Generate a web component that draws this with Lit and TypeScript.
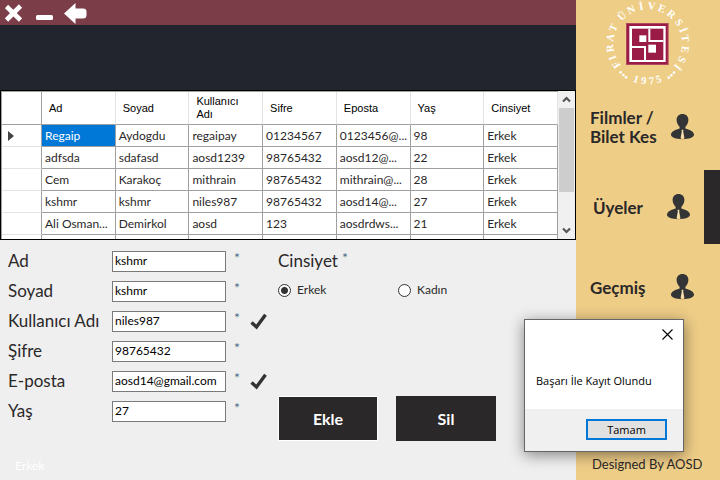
import { LitElement, html, svg, css } from "lit";
import { customElement, state } from "lit/decorators.js";
import { classMap } from "lit/directives/class-map.js";

const COLUMNS = ["Ad", "Soyad", "Kullanıcı Adı", "Sifre", "Eposta", "Yaş", "Cinsiyet"];

const MEMBERS = [
  ["Regaip", "Aydogdu", "regaipay", "01234567", "0123456@...", "98", "Erkek"],
  ["adfsda", "sdafasd", "aosd1239", "98765432", "aosd12@...", "22", "Erkek"],
  ["Cem", "Karakoç", "mithrain", "98765432", "mithrain@...", "28", "Erkek"],
  ["kshmr", "kshmr", "niles987", "98765432", "aosd14@...", "27", "Erkek"],
  ["Ali Osman...", "Demirkol", "aosd", "123", "aosdrdws...", "21", "Erkek"],
  ["", "", "", "", "", "", ""],
];

const FIELDS = [
  { id: "ad", label: "Ad", value: "kshmr", valid: false },
  { id: "soyad", label: "Soyad", value: "kshmr", valid: false },
  { id: "kullanici", label: "Kullanıcı Adı", value: "niles987", valid: true },
  { id: "sifre", label: "Şifre", value: "98765432", valid: false },
  { id: "eposta", label: "E-posta", value: "aosd14@gmail.com", valid: true },
  { id: "yas", label: "Yaş", value: "27", valid: false },
];

// Letters of the seal with their clockwise angle from the top, in degrees.
const SEAL: [string, number][] = [
  ["F", -124], ["I", -112], ["R", -97], ["A", -81], ["T", -65],
  ["Ü", -43], ["N", -26], ["İ", -10], ["V", 6], ["E", 22], ["R", 39],
  ["S", 56], ["İ", 69], ["T", 82], ["E", 99], ["S", 115], ["İ", 128],
];
const SEAL_YEAR: [string, number][] = [["1", 18], ["9", 6], ["7", -6], ["5", -17]];

@customElement("university-seal")
export class UniversitySeal extends LitElement {
  static styles = css`
    :host { display: block; }
    svg { display: block; width: 96px; height: 88px; margin: 0 auto; }
    text {
      font: bold 32px "Liberation Serif", serif;
      fill: #fff;
      text-anchor: middle;
    }
    .crimson { fill: #9b1b47; }
    .edge { fill: #b04a5c; }
    .white { fill: #fff; }
  `;

  render() {
    return html`<svg viewBox="72 0 288 264" role="img" aria-label="Fırat Üniversitesi 1975">
      ${SEAL.map(([c, a]) => svg`<text x="215" y="28" transform="rotate(${a} 215 131)">${c}</text>`)}
      ${SEAL_YEAR.map(([c, a]) => svg`<text x="215" y="253" transform="rotate(${a} 215 131)">${c}</text>`)}
      ${[[134, 217], [142, 225], [150, 232], [278, 233], [286, 226], [294, 218]].map(
        ([x, y]) => svg`<circle class="white" cx=${x} cy=${y} r="4" />`
      )}
      <rect class="edge" x="150" y="69" width="128" height="126" />
      <rect class="crimson" x="153" y="72" width="122" height="120" />
      <rect class="white" x="160" y="78" width="109" height="108" />
      <rect class="crimson" x="168" y="86" width="94" height="94" />
      <path class="white" d="M217 86h6v34h39v6h-45zM168 138h42v42h-6v-36h-36z" />
      <rect class="white" x="190" y="106" width="21" height="20" />
      <rect class="white" x="217" y="134" width="23" height="24" />
    </svg>`;
  }
}

@customElement("app-root")
export class AppRoot extends LitElement {
  @state() private gender = "Erkek";
  @state() private dialogOpen = true;

  static styles = css`
    :host {
      display: grid;
      grid-template-columns: 4fr 1fr;
      position: relative;
      min-height: 100vh;
      background: #efefef;
      color: #2b2829;
      font: 12px/16px Lato, "Liberation Sans", sans-serif;
    }
    * { box-sizing: border-box; }
    button { font: inherit; color: inherit; border: 0; padding: 0; background: none; }
    svg { display: block; }
    main { display: flex; flex-direction: column; min-width: 0; }

    .titlebar {
      display: flex;
      align-items: center;
      gap: 8px;
      height: 25px;
      padding-left: 2px;
      background: #7b3e49;
    }
    .banner { height: 65px; background: #22252d; }

    .grid {
      display: flex;
      height: 150px;
      border: 1px solid #000;
      background: #fff;
    }
    .viewport { flex: 1; min-width: 0; overflow: hidden; }
    table {
      width: 100%;
      table-layout: fixed;
      border-spacing: 0;
      border: solid #a0a0a0;
      border-width: 1px 0 0 1px;
    }
    th, td {
      height: 22px;
      padding: 0 3px;
      border: solid #a0a0a0;
      border-width: 0 1px 1px 0;
      text-align: left;
      white-space: nowrap;
      overflow: hidden;
      line-height: 16px;
    }
    thead th {
      height: 33px;
      padding: 0 20px 0 7px;
      border-right-color: #e3e3e3;
      color: #000;
      font: 11px/13px "Liberation Sans", sans-serif;
      white-space: normal;
    }
    thead .corner { width: 40px; border-right-color: #a0a0a0; }
    tbody th { padding: 0 6px; border-bottom-color: #e3e3e3; }
    .selected { background: #0078d7; color: #fff; }

    .scrollbar {
      display: flex;
      flex-direction: column;
      align-items: center;
      width: 17px;
      background: #f0f0f0;
    }
    .scrollbar button { display: grid; place-items: center; width: 17px; height: 17px; }
    .thumb { width: 15px; height: 84px; margin-bottom: auto; background: #cdcdcd; }

    form {
      flex: 1;
      display: grid;
      grid-template-columns: 270px 1fr;
      grid-template-rows: 1fr auto;
      padding: 6px 8px;
    }
    .row {
      display: grid;
      grid-template-columns: 104px 114px 18px 1fr;
      align-items: center;
      height: 30px;
    }
    .caption { font-size: 17px; line-height: 20px; white-space: nowrap; }
    .row input {
      width: 100%;
      height: 21px;
      padding: 0 2px 2px;
      border: 1px solid #7a7a7a;
      background: #fff;
      color: #000;
      font: inherit;
    }
    .star { align-self: start; padding: 4px 0 0 8px; color: #4d6a86; font-size: 14px; }
    .check { padding-left: 6px; }
    .note { grid-column: 1 / -1; padding: 0 7px; color: #fff; }

    fieldset { margin: 0; padding: 0; border: 0; min-width: 0; }
    legend { display: flex; align-items: center; gap: 4px; height: 30px; padding: 0; }
    legend .star { padding-left: 0; }
    .options { display: flex; height: 28px; align-items: center; }
    .options label { display: flex; align-items: center; gap: 6px; width: 120px; }
    .options input {
      appearance: none;
      width: 13px;
      height: 13px;
      margin: 0;
      border: 1px solid #333;
      border-radius: 50%;
      background: #fff;
    }
    .options input:checked { background: radial-gradient(circle, #333 3px, #fff 4px); }
    .actions { display: flex; gap: 18px; padding-top: 92px; }
    .actions button {
      width: 100px;
      height: 45px;
      border: 1px solid #2b2829;
      background: #2b2829;
      color: #fff;
      font-size: 16px;
      font-weight: bold;
    }
    .actions .primary { border-color: #fff; }

    aside {
      display: flex;
      flex-direction: column;
      align-items: stretch;
      min-width: 0;
      background: #eecd87;
    }
    nav { display: flex; flex-direction: column; gap: 6px; padding-top: 2px; }
    nav button {
      display: grid;
      grid-template-columns: 1fr 24px;
      align-items: center;
      height: 74px;
      padding: 0 9px 0 14px;
      border-right: 16px solid transparent;
      font-size: 17px;
      font-weight: bold;
      line-height: 19px;
      text-align: left;
    }
    nav button.active { padding: 0 13px 0 17px; border-right: 16px solid #2b2829; }
    footer { margin-top: auto; padding: 0 16px 8px; font-size: 13px; white-space: nowrap; }

    .dialog {
      position: absolute;
      right: 36px;
      bottom: 28px;
      display: flex;
      flex-direction: column;
      width: 160px;
      padding: 0;
      border: 1px solid #666;
      background: #fff;
      color: #000;
      box-shadow: 0 3px 14px rgba(0, 0, 0, 0.45);
      font: 11px/16px "Open Sans", "Noto Sans", sans-serif;
    }
    .dialog .close { align-self: flex-end; margin: 9px 10px 0; }
    .dialog p { margin: 33px 11px 20px; white-space: nowrap; }
    .dialog .buttons { display: flex; justify-content: flex-end; padding: 10px 16px 11px; background: #f0f0f0; }
    .dialog .ok { width: 81px; height: 21px; border: 2px solid #0078d7; background: #e1e1e1; }
  `;

  private person() {
    return html`<svg width="24" height="26" viewBox="0 0 24 26" aria-hidden="true">
      <path fill="#333435" d="M11.500 0C15 0 17.400 2.300 17.400 5.800c0 3-1.400 5.400-3 7v1.700c3.600 1 8.600 2.800 8.600 6.300 0 2.600-5 4.400-11.500 4.400S0 23.400 0 20.800c0-3.500 5-5.300 8.600-6.300v-1.700c-1.600-1.600-3-4-3-7C5.600 2.300 8 0 11.500 0z"/>
      <path fill="#eecd87" d="M10.500 15.800h2l-.3 1.800 1.200 6.200-.5 1.400h-2.800l-.5-1.400 1.200-6.200z"/>
      <path fill="#fff" fill-opacity=".5" d="M11 16h1v2l.4 6h-1.800l.4-6z"/>
    </svg>`;
  }

  private nav(label: unknown, active = false) {
    return html`<button class=${classMap({ active })}><span>${label}</span>${this.person()}</button>`;
  }

  private option(name: string) {
    return html`<label>
      <input type="radio" name="cinsiyet" value=${name} .checked=${this.gender === name}
        @change=${() => (this.gender = name)} />${name}
    </label>`;
  }

  render() {
    return html`
      <main>
        <header class="titlebar">
          <button aria-label="Kapat">
            <svg width="23" height="25" viewBox="0 0 23 25"><path d="M4.500 6.500l14 13.500M18.500 6l-14 14" stroke="#fff" stroke-width="4.600" /></svg>
          </button>
          <button aria-label="Küçült">
            <svg width="20" height="25" viewBox="0 0 20 25"><rect x="3" y="15" width="17" height="5" rx="1.500" fill="#fff" /></svg>
          </button>
          <button aria-label="Geri">
            <svg width="28" height="25" viewBox="0 0 28 25"><path d="M3 13.500L14.500 3v5.500H22q3.500 0 3.500 3v3.500q0 3.500-3.500 3.500h-7.500V24z" fill="#fff" /></svg>
          </button>
        </header>
        <div class="banner"></div>
        <section class="grid">
          <div class="viewport">
            <table>
              <thead>
                <tr>
                  <th class="corner"></th>
                  ${COLUMNS.map((c) => html`<th scope="col">${c}</th>`)}
                </tr>
              </thead>
              <tbody>
                ${MEMBERS.map(
                  (row, r) => html`<tr>
                    <th scope="row">
                      ${r === 0 ? html`<svg width="6" height="10" viewBox="0 0 6 10"><path d="M0 0l6 5-6 5z" fill="#444" /></svg>` : ""}
                    </th>
                    ${row.map((v, c) => html`<td class=${classMap({ selected: r === 0 && c === 0 })}>${v}</td>`)}
                  </tr>`
                )}
              </tbody>
            </table>
          </div>
          <div class="scrollbar">
            <button aria-label="Yukarı">
              <svg width="9" height="7" viewBox="0 0 9 7"><path d="M1 5.500L4.500 2 8 5.500" fill="none" stroke="#555" stroke-width="2.200" /></svg>
            </button>
            <div class="thumb"></div>
            <button aria-label="Aşağı">
              <svg width="9" height="7" viewBox="0 0 9 7"><path d="M1 1.500L4.500 5 8 1.500" fill="none" stroke="#555" stroke-width="2.200" /></svg>
            </button>
          </div>
        </section>
        <form @submit=${(e: Event) => e.preventDefault()}>
          <div>
            ${FIELDS.map(
              (f) => html`<div class="row">
                <label class="caption" for=${f.id}>${f.label}</label>
                <input id=${f.id} type="text" .value=${f.value} />
                <span class="star">*</span>
                ${f.valid
                  ? html`<svg class="check" width="24" height="17" viewBox="0 0 18 17"><path d="M1.500 9.500l5 4.500L15.500 1.800" fill="none" stroke="#333" stroke-width="3.400" /></svg>`
                  : ""}
              </div>`
            )}
          </div>
          <div>
            <fieldset>
              <legend><span class="caption">Cinsiyet</span><span class="star">*</span></legend>
              <div class="options">${this.option("Erkek")}${this.option("Kadın")}</div>
            </fieldset>
            <div class="actions">
              <button class="primary">Ekle</button>
              <button>Sil</button>
            </div>
          </div>
          <div class="note">Erkek</div>
        </form>
      </main>
      <aside>
        <university-seal></university-seal>
        <nav>
          ${this.nav(html`Filmler /<br />Bilet Kes`)}
          ${this.nav("Üyeler", true)}
          ${this.nav("Geçmiş")}
        </nav>
        <footer>Designed By AOSD</footer>
      </aside>
      ${this.dialogOpen
        ? html`<div class="dialog" role="dialog" aria-label="Başarı İle Kayıt Olundu">
            <button class="close" aria-label="Kapat" @click=${() => (this.dialogOpen = false)}>
              <svg width="11" height="11" viewBox="0 0 11 11"><path d="M.5.500l10 10M10.500.500l-10 10" stroke="#000" stroke-width="1.100" /></svg>
            </button>
            <p>Başarı İle Kayıt Olundu</p>
            <div class="buttons"><button class="ok" @click=${() => (this.dialogOpen = false)}>Tamam</button></div>
          </div>`
        : ""}
    `;
  }
}
